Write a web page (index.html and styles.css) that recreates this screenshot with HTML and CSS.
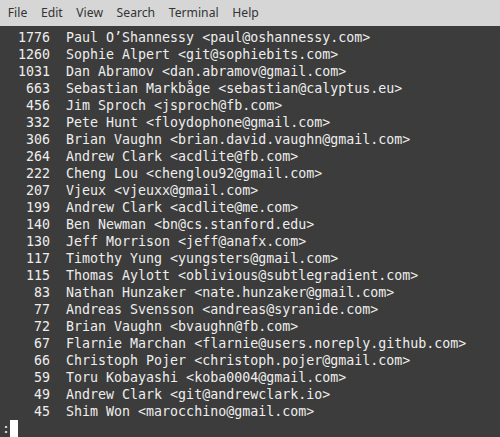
FILE: index.html
```html
<!DOCTYPE html>
<html>
<head>
<meta charset="utf-8">
<link rel="stylesheet" href="styles.css">
</head>
<body>
<div class="window">
  <nav class="menubar">
    <span class="menu-item">File</span>
    <span class="menu-item">Edit</span>
    <span class="menu-item">View</span>
    <span class="menu-item">Search</span>
    <span class="menu-item">Terminal</span>
    <span class="menu-item">Help</span>
  </nav>
  <main class="terminal">
<pre class="output">  1776  Paul O’Shannessy &lt;paul@oshannessy.com&gt;
  1260  Sophie Alpert &lt;git@sophiebits.com&gt;
  1031  Dan Abramov &lt;dan.abramov@gmail.com&gt;
   663  Sebastian Markbåge &lt;sebastian@calyptus.eu&gt;
   456  Jim Sproch &lt;jsproch@fb.com&gt;
   332  Pete Hunt &lt;floydophone@gmail.com&gt;
   306  Brian Vaughn &lt;brian.david.vaughn@gmail.com&gt;
   264  Andrew Clark &lt;acdlite@fb.com&gt;
   222  Cheng Lou &lt;chenglou92@gmail.com&gt;
   207  Vjeux &lt;vjeuxx@gmail.com&gt;
   199  Andrew Clark &lt;acdlite@me.com&gt;
   140  Ben Newman &lt;bn@cs.stanford.edu&gt;
   130  Jeff Morrison &lt;jeff@anafx.com&gt;
   117  Timothy Yung &lt;yungsters@gmail.com&gt;
   115  Thomas Aylott &lt;oblivious@subtlegradient.com&gt;
    83  Nathan Hunzaker &lt;nate.hunzaker@gmail.com&gt;
    77  Andreas Svensson &lt;andreas@syranide.com&gt;
    72  Brian Vaughn &lt;bvaughn@fb.com&gt;
    67  Flarnie Marchan &lt;flarnie@users.noreply.github.com&gt;
    66  Christoph Pojer &lt;christoph.pojer@gmail.com&gt;
    59  Toru Kobayashi &lt;koba0004@gmail.com&gt;
    49  Andrew Clark &lt;git@andrewclark.io&gt;
    45  Shim Won &lt;marocchino@gmail.com&gt;
:<span class="cursor"> </span></pre>
  </main>
</div>
</body>
</html>
```

FILE: styles.css
```css
html, body {
  margin: 0;
  padding: 0;
  background: #3c3c3c;
}
.window {
  width: 500px;
  height: 437px;
  overflow: hidden;
  display: flex;
  flex-direction: column;
}
.menubar {
  height: 26px;
  background: #d6d6d6;
  display: flex;
  align-items: center;
  padding-left: 1px;
  font-family: "Noto Sans", sans-serif;
  font-size: 12.2px;
  color: #333333;
  flex-shrink: 0;
}
.menu-item {
  padding: 0 6.8px;
  line-height: 26px;
}
.terminal {
  flex: 1;
  background: #3c3c3c;
  padding: 2.5px 0 0 2px;
}
.output {
  margin: 0;
  font-family: "DejaVu Sans Mono", monospace;
  font-size: 13.3px;
  line-height: 17px;
  color: #eeeeec;
}
.cursor {
  display: inline-block;
  width: 8px;
  height: 17px;
  vertical-align: top;
  background: #ffffff;
}
```
